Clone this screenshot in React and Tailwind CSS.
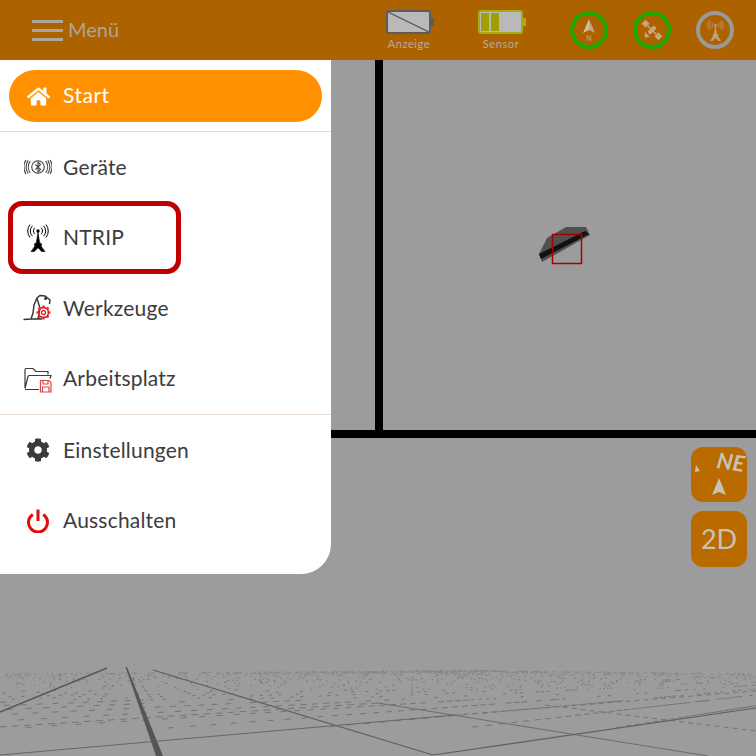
import { FaHome, FaCog } from "react-icons/fa";

// ground plane: two vanishing points, taken from the lines in the picture
const COS = 0.845;
const SIN = 0.533;
const project = (X, Z) => {
  const x = X * COS - Z * SIN;
  const z = X * SIN + Z * COS;
  return [378 + (393 * x) / z, 667 + 393 / z, z];
};

const seg = (a, b) => `M${a[0].toFixed(1)} ${a[1].toFixed(1)}L${b[0].toFixed(1)} ${b[1].toFixed(1)}`;

function buildDots() {
  let seed = 7;
  const rnd = () => {
    seed = (seed * 16807) % 2147483647;
    return seed / 2147483647;
  };
  const bands = ["", "", ""];
  for (let k = 0; k < 60; k++) {
    const Z = 3.4 + 1.3 * k;
    for (let X = -80; X < 80; X += 0.33) {
      const [sx, sy, z] = project(X, Z);
      if (z < 5 || z > 150 || sx < 0 || sx > 756) continue;
      if (sy > 728) continue;
      // far rows would turn solid, so thin them out
      const keep = sy > 704 ? 1 : Math.max(0.07, ((sy - 667) / 37) ** 1.8 * 0.7);
      if (rnd() > keep) continue;
      const len = sy > 700 ? 6 : sy > 690 ? 3 : 1.5;
      const next = `M${sx.toFixed(1)} ${sy.toFixed(1)}l${len} ${(-len * 0.09).toFixed(1)}`;
      if (sy > 695) bands[0] += next;
      else if (sy > 678) bands[1] += next;
      else bands[2] += next;
    }
  }
  return bands;
}

const dots = buildDots();

function Scene() {
  return (
    <svg className="absolute inset-0" width="756" height="756" viewBox="0 0 756 756">
      <path d={dots[0]} stroke="#757575" strokeWidth="1" fill="none" />
      <path d={dots[1]} stroke="#767676" strokeWidth="1" fill="none" />
      <path d={dots[2]} stroke="#858585" strokeWidth="1" fill="none" />
      {/* lines running to the left vanishing point */}
      <path d={seg([0, 712], [107, 668])} stroke="#575757" strokeWidth="1.4" fill="none" />
      <path d={seg([153, 670], [433, 755])} stroke="#5f5f5f" strokeWidth="1.2" fill="none" />
      <path d={seg([378, 703], [708, 756])} stroke="#6c6c6c" strokeWidth="1" fill="none" />
      <path d={seg([545, 705], [756, 731])} stroke="#757575" strokeDasharray="5 4" fill="none" />
      {/* lines running to the right vanishing point */}
      <path d={seg([433, 755], [756, 708])} stroke="#5f5f5f" strokeWidth="1.2" fill="none" />
      <path d={seg([0, 755], [455, 715])} stroke="#666666" strokeWidth="1" fill="none" />
      <path d={seg([455, 715], [756, 691])} stroke="#757575" strokeDasharray="5 4" fill="none" />
      <path d={seg([0, 727], [378, 703])} stroke="#757575" strokeDasharray="7 5" fill="none" />
      <polygon points="125.500,667 127,667 163,756 156,756" fill="#555555" />

      {/* boxes around the sensor view */}
      <rect x="375" y="60" width="8" height="378" fill="#000" />
      <rect x="331" y="430" width="425" height="8" fill="#000" />

      {/* sensor block */}
      <polygon points="547,238 566,227 586,227 590,235 542,262 539,254" fill="#505050" />
      <polygon points="539,254 585,231 589,234 541,259" fill="#111" />
      <rect x="552.500" y="234.500" width="29" height="29" fill="none" stroke="#a80000" strokeWidth="1.500" />
    </svg>
  );
}

function Battery({ label, border, nub, children }) {
  return (
    <div className="flex w-[60px] flex-col items-center">
      <div className="flex items-center pl-[2px]">
        <div className={`relative h-[24px] w-[45px] rounded-[3px] border-2 bg-[#b9b9b9] ${border}`}>{children}</div>
        <div className={`h-[8px] w-[3px] ${nub}`} />
      </div>
      <span className="mt-[3px] text-[11px] leading-[14px] tracking-[0.6px] text-[#b3aca0]">{label}</span>
    </div>
  );
}

function Ring({ ring, children }) {
  return (
    <div className={`flex h-[38px] w-[38px] items-center justify-center rounded-full border-[4px] ${ring}`}>{children}</div>
  );
}

function Tower({ color, size = 28 }) {
  return (
    <svg width={size} height={size} viewBox="0 0 28 28" fill="none" stroke={color}>
      <path d="M14 8 12.800 16Q12 22 7 27.500H10.500Q13 24 14 24Q15 24 17.500 27.500H21Q16 22 15.200 16L14 8Z" fill={color} strokeWidth="0.600" />
      <path d="M10 20.500h8" strokeWidth="1.800" />
      <circle cx="14" cy="7" r="1.700" fill={color} stroke="none" />
      <path
        d="M10.800 3.800a4.500 4.500 0 0 0 0 6.400M17.200 3.800a4.500 4.500 0 0 1 0 6.400M8.400 1.800a7.500 7.500 0 0 0 0 10.400M19.600 1.800a7.500 7.500 0 0 1 0 10.400M6 0.500a10.500 10.500 0 0 0 0 13M22 0.500a10.500 10.500 0 0 1 0 13"
        strokeWidth="1"
      />
    </svg>
  );
}

function DevicesIcon() {
  return (
    <svg width="28" height="28" viewBox="0 0 28 28" fill="none" stroke="#444">
      <circle cx="14" cy="14" r="6.300" strokeWidth="1.100" />
      <path d="M11.300 11.300 16.600 16.500 14 19V9l2.600 2.500-5.300 5.200" strokeWidth="1.100" />
      <path
        d="M6.300 8.200A9.500 9.500 0 0 0 6.300 19.800M21.700 8.200A9.500 9.500 0 0 1 21.700 19.800M4.200 7.400A12 12 0 0 0 4.200 20.600M23.800 7.400A12 12 0 0 1 23.800 20.600M1.900 7A14 14 0 0 0 1.900 21M26.100 7A14 14 0 0 1 26.100 21"
        strokeWidth="1.100"
      />
    </svg>
  );
}

function SmallGear({ cx, cy }) {
  return (
    <g transform={`translate(${cx} ${cy})`} stroke="#d92b2b" fill="none">
      <circle r="2" strokeWidth="1.400" />
      <circle r="5" strokeWidth="1.800" />
      <path d="M0-7v2M0 5v2M-7 0h2M5 0h2M-5-5l1.500 1.500M3.500 3.500 5 5M5-5 3.500-3.500M-3.500 3.500-5 5" strokeWidth="2.200" />
    </g>
  );
}

function ToolsIcon() {
  return (
    <svg className="ml-[2px] shrink-0" width="32" height="28" viewBox="0 0 32 28" fill="none">
      <path
        d="M0.500 25.500 8 25 10 19 11 11 14 4 17 1.500 22 2 27 6 26.500 10M8 25H19M14 4.500 17 14 15 25"
        stroke="#333"
        strokeWidth="1.400"
      />
      <circle cx="22.500" cy="4.500" r="1.500" fill="#333" />
      <SmallGear cx="20.500" cy="18.500" />
    </svg>
  );
}

function FolderIcon() {
  return (
    <svg width="28" height="28" viewBox="0 0 28 28" fill="none">
      <path
        d="M1 23.500V4.500q0-1 1-1h7l3 3h12v3M1 23.500 4 11.500q.3-1 1.300-1H27l-1 3M1 24.500h14"
        stroke="#3a3a3a"
        strokeWidth="1.200"
      />
      <g stroke="#d94a4a" strokeWidth="1.200">
        <path d="M16.500 15.500h8.500l2 2v9.500H16.500z" fill="#fff" />
        <path d="M19 15.500v3.500h5v-3.500M18.500 27v-5h6.500v5" />
      </g>
    </svg>
  );
}

function PowerIcon() {
  return (
    <svg width="24" height="24" viewBox="0 0 24 24" fill="none" stroke="#e20a0a" strokeWidth="3">
      <path d="M6.800 5.500a9.500 9.500 0 1 0 10.400 0" />
      <path d="M12 0.500v11.500" />
    </svg>
  );
}

function MenuRow({ icon, label }) {
  return (
    <div className="flex h-[70.5px] items-center">
      <div className="flex w-[52px] shrink-0 justify-center pl-[24px]">
        <div className="flex w-[28px] justify-center">{icon}</div>
      </div>
      <span className="mb-[2px] ml-[11px] text-[21px] tracking-[0.2px] text-[#3c3c3c]">{label}</span>
    </div>
  );
}

function MenuPanel() {
  return (
    <div className="absolute left-0 top-[60px] h-[514px] w-[331px] rounded-br-[30px] bg-white pt-[10px]">
      <div className="mx-[9px] flex h-[52px] w-[313px] items-center rounded-[26px] bg-[#ff9100] text-white">
        <div className="flex w-[43px] shrink-0 justify-center pl-[15px]">
          <FaHome size={23} className="shrink-0" />
        </div>
        <span className="mb-[2px] ml-[11px] text-[21px] tracking-[0.5px]">Start</span>
      </div>
      <div className="mt-[9px] h-px bg-[#e6dcd4]" />
      <MenuRow icon={<DevicesIcon />} label="Geräte" />
      <MenuRow icon={<Tower color="#000" />} label="NTRIP" />
      <MenuRow icon={<ToolsIcon />} label="Werkzeuge" />
      <MenuRow icon={<FolderIcon />} label="Arbeitsplatz" />
      <div className="h-px bg-[#eadcd0]" />
      <MenuRow icon={<FaCog size={24} color="#3c3c3c" />} label="Einstellungen" />
      <MenuRow icon={<PowerIcon />} label="Ausschalten" />

      {/* highlight on the NTRIP row */}
      <div className="absolute left-[8px] top-[141px] h-[73px] w-[173px] rounded-[14px] border-[5px] border-[#c00000]" />
    </div>
  );
}

function Header() {
  return (
    <header className="relative flex h-[60px] items-center bg-[#ad6200] pl-[32px]">
      <div className="flex w-[31px] flex-col gap-[6px]">
        <div className="h-[3px] bg-[#aca59a]" />
        <div className="h-[3px] bg-[#aca59a]" />
        <div className="h-[3px] bg-[#aca59a]" />
      </div>
      <span className="mb-[2px] ml-[5px] w-[55px] text-[20px] text-[#aca59a]">Menü</span>

      <div className="ml-[256px] flex items-center">
        <Battery label="Anzeige" border="border-[#5c5c5c]" nub="bg-[#5c5c5c]">
          <svg className="absolute inset-0" width="41" height="20" viewBox="0 0 41 20">
            <path d="M0 0 41 20" stroke="#5c5c5c" strokeWidth="1.300" />
          </svg>
        </Battery>
        <div className="w-[32px]" />
        <Battery label="Sensor" border="border-[#a7ad10]" nub="bg-[#a7ad10]">
          <div className="flex h-full gap-[2px] p-[1px]">
            <div className="w-[8px] bg-[#a0a000]" />
            <div className="w-[8px] bg-[#a0a000]" />
          </div>
        </Battery>
      </div>

      <div className="ml-[39px] flex gap-[25px]">
        <Ring ring="border-[#1fa800]">
          <svg width="20" height="24" viewBox="0 0 20 24" fill="#c4a47c">
            <path d="M10 1 16 15 10 12z" />
            <path d="M10 1 4 15 10 12z" fill="#d3bd9f" />
            <text x="10" y="23" fontSize="7" textAnchor="middle" fontFamily="Lato, sans-serif">N</text>
          </svg>
        </Ring>
        <Ring ring="border-[#1fa800]">
          <svg width="26" height="26" viewBox="0 0 26 26" fill="#c8a77c">
            <g transform="rotate(45 13 13)">
              <path d="M1 10h6v6H1zM19 10h6v6h-6z" stroke="#ad6200" strokeWidth="0.600" />
              <rect x="7" y="12.300" width="12" height="1.400" />
              <rect x="11" y="8.500" width="4" height="9" rx="1" />
              <path d="M9.500 19.500h7l-3.500 4z" />
            </g>
          </svg>
        </Ring>
        <Ring ring="border-[#999999]">
          <Tower color="#c4a177" size={21} />
        </Ring>
      </div>
    </header>
  );
}

export default function App() {
  return (
    <div
      className="relative h-[756px] w-[756px] overflow-hidden bg-[#9c9c9c]"
      style={{ fontFamily: 'Lato, sans-serif' }}
    >
      <Scene />
      <Header />
      <MenuPanel />

      <div className="absolute left-[691px] top-[447px] flex flex-col gap-[9px]">
        <div className="relative h-[55px] w-[56px] overflow-hidden rounded-[12px] bg-[#b96b00]">
          <span className="absolute left-[26px] top-[2px] rotate-[8deg] text-[22px] font-bold italic leading-[26px] text-[#c8c2b4]">
            NE
          </span>
          <svg className="absolute inset-0" width="56" height="55" viewBox="0 0 56 55" fill="#c8c2b4">
            <path d="M28 31 35 48 28 45 21 48z" />
            <path d="M5 18 9 24 4 25z" />
          </svg>
        </div>
        <div className="flex h-[56px] w-[56px] items-center justify-center rounded-[12px] bg-[#b96b00] text-[27px] text-[#c8c2b4]">
          2D
        </div>
      </div>
    </div>
  );
}
